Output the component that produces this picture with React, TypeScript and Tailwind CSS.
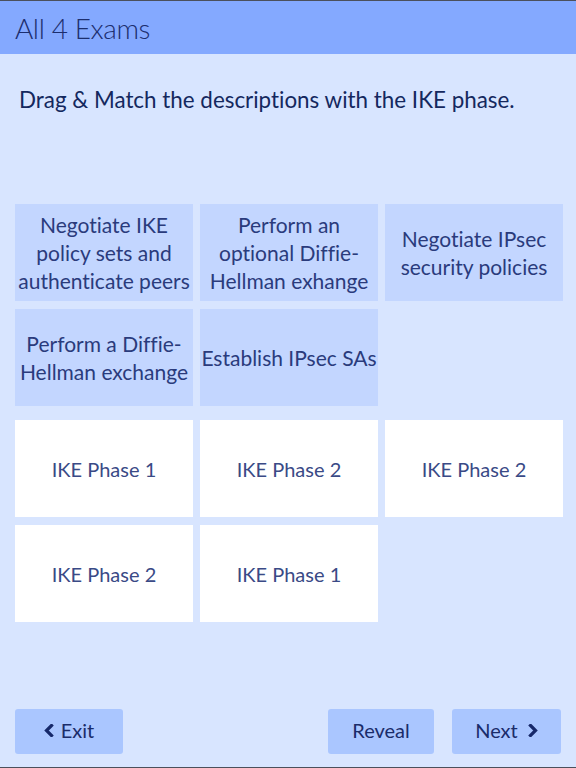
import React from "react";

const font = { fontFamily: "Lato, 'Noto Sans', sans-serif", fontVariantLigatures: "none" as const };

function Card({ lines, white }: { lines: string[]; white?: boolean }) {
  return (
    <div
      className={
        "h-[97px] flex items-center justify-center text-center whitespace-nowrap leading-[28px] " +
        (white
          ? "bg-white text-[#3a4a86] text-[20px]"
          : "bg-[#c3d6ff] text-[#2a3b7c] text-[21px]")
      }
    >
      <div>
        {lines.map((l, i) => (
          <div key={i}>{l}</div>
        ))}
      </div>
    </div>
  );
}

function Chevron({ dir }: { dir: "left" | "right" }) {
  return (
    <svg width="10" height="13" viewBox="0 0 10 13" className="shrink-0">
      <polyline
        points={dir === "left" ? "7.5,1.5 2.5,6.5 7.5,11.5" : "2.5,1.5 7.5,6.5 2.5,11.5"}
        fill="none"
        stroke="#16286a"
        strokeWidth="3.2"
        strokeLinecap="square"
        strokeLinejoin="miter"
      />
    </svg>
  );
}

export default function App() {
  return (
    <div
      className="w-[576px] h-[768px] flex flex-col bg-[#d8e5ff] border-t border-b border-[#4b505c]"
      style={font}
    >
      <div className="h-[53px] bg-[#84a9ff] flex items-center px-[15px]">
        <span className="text-[28px] font-light text-[#1c2e6e] tracking-[-0.4px]">All 4 Exams</span>
      </div>
      <div className="pt-[31px] px-[19px] text-[22.4px] leading-[30px] text-[#14285e]">
        Drag &amp; Match the descriptions with the IKE phase.
      </div>
      <div className="mt-[89px] pl-[15px] grid grid-cols-[178px_178px_178px] gap-x-[7px] gap-y-[8px]">
        <Card lines={["Negotiate IKE", "policy sets and", "authenticate peers"]} />
        <Card lines={["Perform an", "optional Diffie-", "Hellman exhange"]} />
        <Card lines={["Negotiate IPsec", "security policies"]} />
        <Card lines={["Perform a Diffie-", "Hellman exchange"]} />
        <Card lines={["Establish IPsec SAs"]} />
      </div>
      <div className="mt-[14px] pl-[15px] grid grid-cols-[178px_178px_178px] gap-x-[7px] gap-y-[8px]">
        <Card white lines={["IKE Phase 1"]} />
        <Card white lines={["IKE Phase 2"]} />
        <Card white lines={["IKE Phase 2"]} />
        <Card white lines={["IKE Phase 2"]} />
        <Card white lines={["IKE Phase 1"]} />
      </div>
      <div className="flex-1" />
      <div className="flex items-center px-[15px] pb-[13px] text-[20px] leading-[24px] text-[#1a2c6a]">
        <button className="w-[108px] h-[45px] rounded-[3px] bg-[#aac6ff] flex items-center justify-center gap-[7px] pb-[3px]">
          <Chevron dir="left" />
          <span>Exit</span>
        </button>
        <div className="flex-1" />
        <button className="w-[106px] h-[45px] rounded-[3px] bg-[#aac6ff] flex items-center justify-center pb-[3px]">
          Reveal
        </button>
        <button className="ml-[18px] w-[109px] h-[45px] rounded-[3px] bg-[#aac6ff] flex items-center justify-center gap-[10px] pb-[3px]">
          <span>Next</span>
          <Chevron dir="right" />
        </button>
      </div>
    </div>
  );
}
